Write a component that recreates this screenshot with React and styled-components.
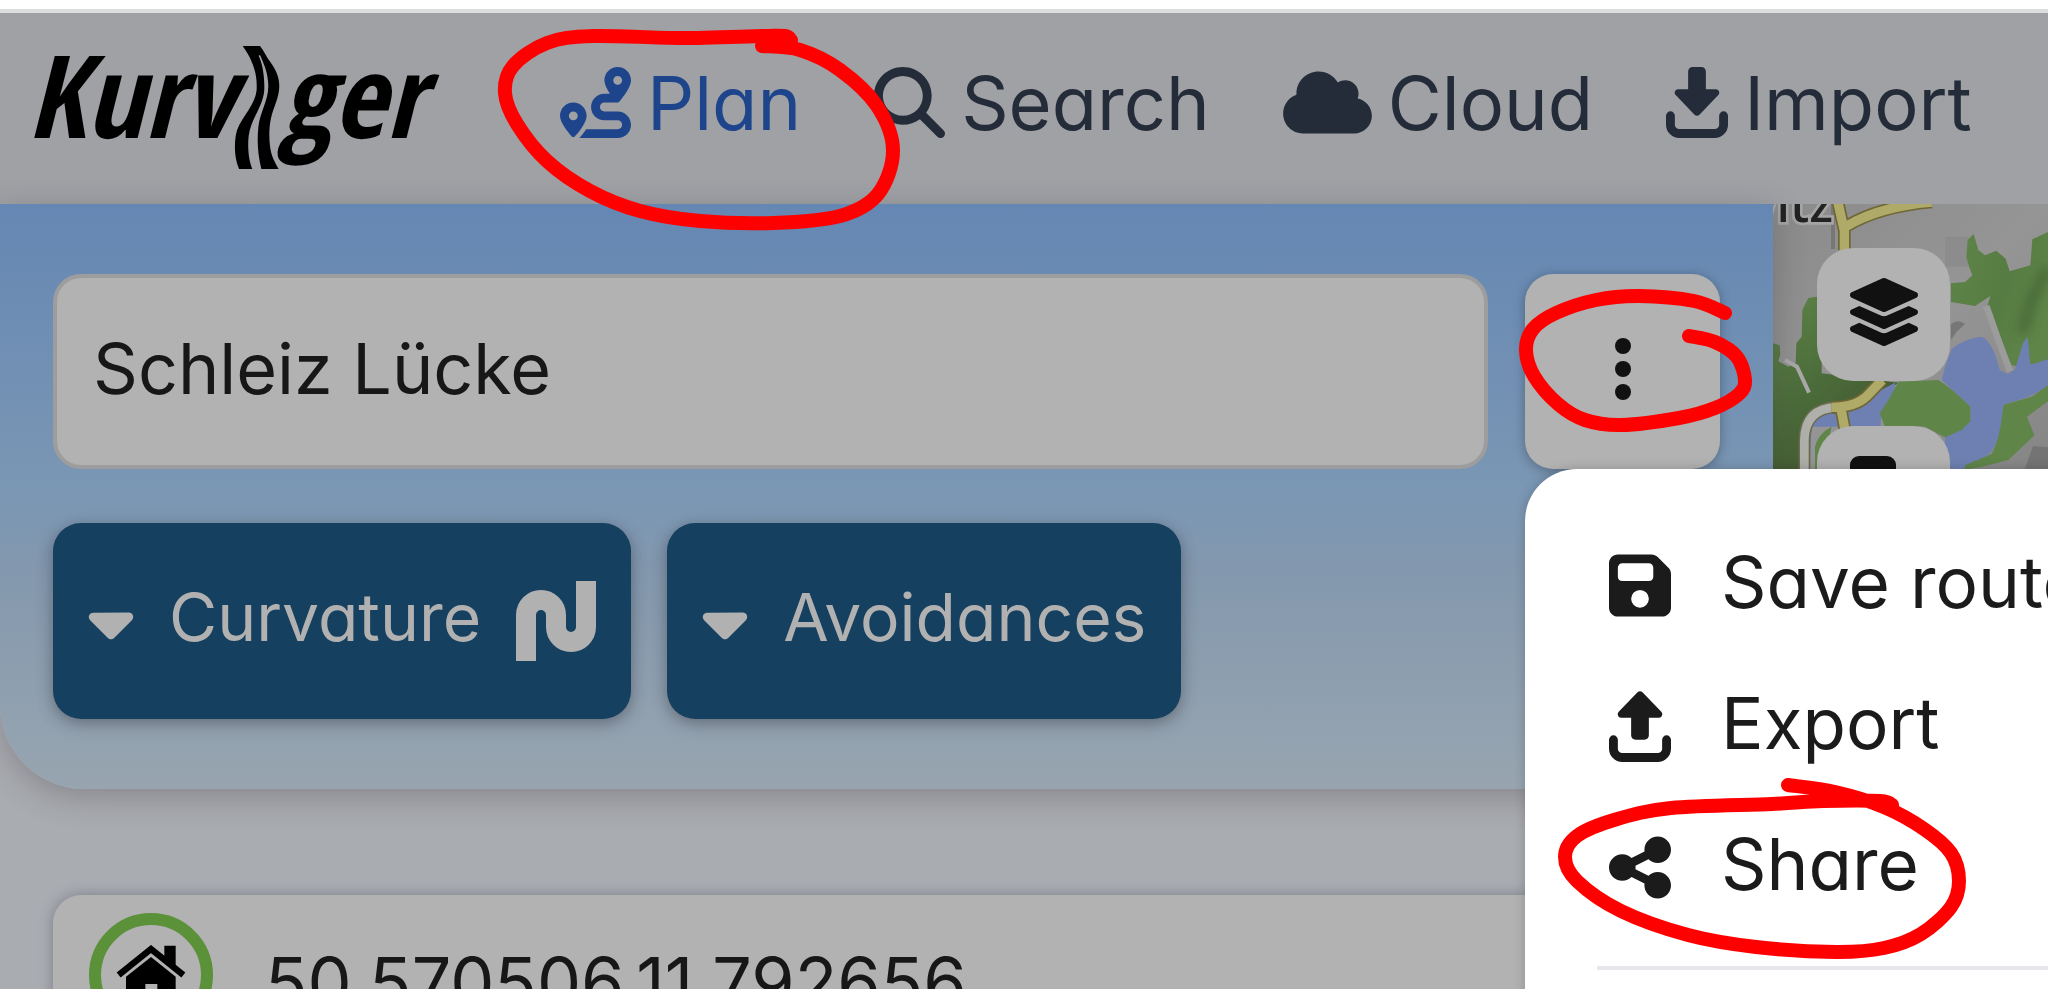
import React from "react";

// IMPORT STYLES
import styled, { createGlobalStyle } from "styled-components";

// IMPORT ICONS
import {
  FaRoute,
  FaMagnifyingGlass,
  FaCloud,
  FaCaretDown,
  FaFloppyDisk,
  FaShareNodes,
} from "react-icons/fa6";
import { FaLayerGroup } from "react-icons/fa";

const navItems = [
  { label: "Plan", Icon: FaRoute, width: 71, active: true },
  { label: "Search", Icon: FaMagnifyingGlass, width: 71 },
  { label: "Cloud", Icon: FaCloud, width: 89 },
  { label: "Import", Icon: ImportIcon, width: 62 },
];

const menuItems = [
  { label: "Save route", Icon: FaFloppyDisk },
  { label: "Export", Icon: ExportIcon },
  { label: "Share", Icon: FaShareNodes },
];

// HAND DRAWN MARKS, AS POINTS ON THE PEN LINE
const marks = [
  [
    [762, 46], [800, 50], [840, 70], [877, 106], [893, 150], [878, 194],
    [840, 216], [773, 223], [700, 221], [640, 211], [590, 191], [547, 161],
    [517, 124], [505, 93], [513, 66], [547, 43], [593, 36], [680, 38],
    [763, 36], [785, 36], [791, 40],
  ],
  [
    [1689, 336], [1715, 342], [1737, 357], [1745, 380], [1739, 394],
    [1715, 408], [1679, 418], [1621, 425], [1585, 420], [1558, 404],
    [1534, 376], [1526, 350], [1533, 329], [1556, 313], [1596, 300],
    [1639, 296], [1694, 301], [1725, 313],
  ],
  [
    [1788, 785], [1835, 792], [1884, 807], [1924, 829], [1951, 853],
    [1959, 881], [1951, 907], [1921, 934], [1884, 948], [1836, 952],
    [1756, 947], [1688, 935], [1621, 911], [1577, 881], [1565, 857],
    [1577, 836], [1614, 820], [1671, 808], [1772, 804], [1823, 801],
    [1880, 801], [1892, 805],
  ],
];

const smoothPath = (points) => {
  const at = (i) => points[Math.max(0, Math.min(points.length - 1, i))];
  let d = `M${at(0).join(" ")}`;
  for (let i = 0; i < points.length - 1; i++) {
    const [p0, p1, p2, p3] = [at(i - 1), at(i), at(i + 1), at(i + 2)];
    const c1 = [0, 1].map((k) => p1[k] + (p2[k] - p0[k]) / 6);
    const c2 = [0, 1].map((k) => p2[k] - (p3[k] - p1[k]) / 6);
    d += ` C${c1.join(" ")} ${c2.join(" ")} ${p2.join(" ")}`;
  }
  return d;
};

function ImportIcon() {
  return (
    <svg viewBox="0 0 448 512" aria-hidden="true">
      <path
        fill="currentColor"
        d="M192 0h64c18 0 32 14 32 32v128h72c22 0 33 26 18 42L242 344c-10 10-26 10-36 0L70 202c-15-16-4-42 18-42h72V32c0-18 14-32 32-32z"
      />
      <path
        d="M32 352v64a64 64 0 0 0 64 64h256a64 64 0 0 0 64-64v-64"
        fill="none"
        stroke="currentColor"
        strokeWidth="64"
        strokeLinecap="round"
      />
    </svg>
  );
}

function ExportIcon() {
  return (
    <svg viewBox="0 0 448 512" aria-hidden="true">
      <path
        fill="currentColor"
        d="M192 352h64c18 0 32-14 32-32V192h72c22 0 33-26 18-42L242 8c-10-10-26-10-36 0L70 150c-15 16-4 42 18 42h72v128c0 18 14 32 32 32z"
      />
      <path
        d="M32 352v64a64 64 0 0 0 64 64h256a64 64 0 0 0 64-64v-64"
        fill="none"
        stroke="currentColor"
        strokeWidth="64"
        strokeLinecap="round"
      />
    </svg>
  );
}

function Logo() {
  return (
    <LogoLink href="#home" aria-label="Kurviger">
      <span>Kurv</span>
      <RoadMark viewBox="42 42 138 376" aria-hidden="true">
        <path d="M68 45H120C134 62 139 78 150 92C168 116 178 140 178 165C178 200 160 230 153 262C147 290 147 320 150 345C153 375 165 395 176 415H124C113 370 111 330 115 290C119 245 145 210 145 165C145 125 130 95 120 72L116 74C126 95 134 130 133 175C131 225 92 265 86 315C82 350 86 390 97 415H57C44 385 42 350 47 315C54 265 106 230 110 175C112 130 100 90 68 45Z" />
      </RoadMark>
      <span>ger</span>
    </LogoLink>
  );
}

function MapView() {
  return (
    <MapContainer aria-label="Map">
      <MapCanvas viewBox="24 12 825 798" aria-hidden="true">
        <defs>
          <linearGradient id="land" x1="0" y1="0" x2="1" y2="1">
            <stop offset="0" stopColor="#8b8b8b" />
            <stop offset="0.5" stopColor="#959595" />
            <stop offset="1" stopColor="#858585" />
          </linearGradient>
          <linearGradient id="valley" x1="0" y1="0" x2="0.7" y2="1">
            <stop offset="0" stopColor="#5f8549" />
            <stop offset="0.5" stopColor="#4b6c3a" />
            <stop offset="1" stopColor="#42542f" />
          </linearGradient>
          <linearGradient id="forest" x1="0" y1="0" x2="1" y2="0.5">
            <stop offset="0" stopColor="#5f8549" />
            <stop offset="0.6" stopColor="#567c43" />
            <stop offset="1" stopColor="#5f8549" />
          </linearGradient>
          <filter id="shade" x="-50%" y="-50%" width="200%" height="200%">
            <feGaussianBlur stdDeviation="16" />
          </filter>
        </defs>
        <rect x="24" y="12" width="825" height="798" fill="url(#land)" />
        <rect x="198" y="12" width="12" height="135" fill="#777" />
        <rect x="540" y="110" width="70" height="90" fill="#8c8c8c" />
        {/* forest */}
        <path
          fill="url(#valley)"
          d="M24 430L44 436L46 462L40 484L70 500L92 488L94 430L110 410L112 330L130 294L170 288V520L400 548L330 600L130 650L108 810H24Z"
        />
        <path
          fill="url(#forest)"
          d="M558 250L600 246L622 226L612 200L604 170L608 120L626 102L640 150L660 166L694 152L722 176L734 214L796 196L802 118L849 96V484L792 494L770 500L740 496L690 400L664 330L676 288L630 318L558 306Z"
        />
        <path
          fill="none"
          stroke="#3e5c2f"
          strokeWidth="34"
          opacity="0.6"
          filter="url(#shade)"
          d="M849 200L800 300L770 400"
        />
        <path fill="#777" d="M558 372Q580 355 600 372L575 395L558 420Z" />
        {/* water */}
        <path
          fill="#6d80b1"
          d="M540 500L560 446Q600 414 652 410Q686 430 704 510L730 522L750 508L774 430L788 410L796 494L849 478V562L780 594L716 614L704 700Q690 760 640 786L600 810H540V708L616 664V620L530 540Z"
        />
        <path
          fill="#6d80b1"
          d="M390 548L388 600L350 636L346 680H140L134 810H120V690Q140 640 190 640L240 620L330 580Z"
        />
        <path
          fill="#5f8549"
          d="M400 545L520 540Q560 565 616 620V664L590 690L540 712L480 680H360L344 640L370 600Z"
        />
        <path
          fill="#5f8549"
          d="M716 614L800 590L849 556V604L786 650L808 706L730 780L660 798L600 810V796L680 762Q704 720 712 640Z"
        />
        <path fill="#5f8549" d="M150 810V740Q160 700 200 680L170 810Z" />
        <path fill="#747474" d="M804 738L849 742V806H780Z" />
        {/* roads */}
        <path
          fill="none"
          stroke="#a9a9a9"
          strokeWidth="12"
          d="M60 480L96 500L132 578"
        />
        <path
          fill="none"
          stroke="#9c9c9c"
          strokeWidth="20"
          d="M664 318L700 420L735 514"
        />
        <path
          fill="none"
          stroke="#6b6b50"
          strokeWidth="36"
          d="M118 810V720Q120 625 214 622"
        />
        <path
          fill="none"
          stroke="#b0b0aa"
          strokeWidth="26"
          d="M118 810V720Q120 625 214 622"
        />
        <g fill="none" stroke="#6e6636" strokeWidth="38">
          <path d="M238 150V92L218 4M242 80Q340 20 500 6" />
          <path d="M200 622Q270 622 304 590L352 540M226 616L240 690" />
        </g>
        <g fill="none" stroke="#b0aa68" strokeWidth="28">
          <path d="M238 150V92L218 4M242 80Q340 20 500 6" />
          <path d="M200 622Q270 622 304 590L352 540M226 616L240 690" />
        </g>
        <MapLabel x="204" y="66" textAnchor="end">
          witz
        </MapLabel>
      </MapCanvas>
      <MapControls>
        <MapButton type="button" aria-label="Layers">
          <FaLayerGroup />
        </MapButton>
        <MapButton type="button" aria-label="Overlays">
          <svg viewBox="0 0 68 68" aria-hidden="true">
            <rect width="46" height="46" rx="9" fill="currentColor" />
            <path
              d="M56 24v32H24"
              fill="none"
              stroke="currentColor"
              strokeWidth="9"
            />
          </svg>
        </MapButton>
      </MapControls>
    </MapContainer>
  );
}

function App() {
  return (
    <Page>
      <GlobalStyle />
      <Header>
        <Logo />
        <Nav>
          {navItems.map(({ label, Icon, width, active }) => (
            <NavLink href={`#${label.toLowerCase()}`} key={label} $active={active}>
              <Glyph $width={width}>
                <Icon />
              </Glyph>
              {label}
            </NavLink>
          ))}
        </Nav>
      </Header>
      <Main>
        <Sidebar>
          <RoutePanel>
            <TitleRow>
              <TitleInput
                type="text"
                aria-label="Route name"
                defaultValue="Schleiz Lücke"
              />
              <MenuAnchor>
                <MoreButton type="button" aria-label="More" aria-expanded="true">
                  <svg viewBox="0 0 16 62" aria-hidden="true">
                    <circle cx="8" cy="8" r="8" />
                    <circle cx="8" cy="31" r="8" />
                    <circle cx="8" cy="54" r="8" />
                  </svg>
                </MoreButton>
                <Menu>
                  {menuItems.map(({ label, Icon }) => (
                    <MenuItem type="button" key={label}>
                      <Glyph $width={62}>
                        <Icon />
                      </Glyph>
                      <Label>{label}</Label>
                    </MenuItem>
                  ))}
                  <Divider />
                </Menu>
              </MenuAnchor>
            </TitleRow>
            <OptionRow>
              <OptionButton type="button">
                <Glyph $width={46}>
                  <FaCaretDown />
                </Glyph>
                <Label>Curvature</Label>
                <CurveMark viewBox="0 0 80 80" aria-hidden="true">
                  <path d="M10 80V34a15 15 0 0 1 30 0v12a15 15 0 0 0 30 0V0" />
                </CurveMark>
              </OptionButton>
              <OptionButton type="button">
                <Glyph $width={46}>
                  <FaCaretDown />
                </Glyph>
                <Label>Avoidances</Label>
              </OptionButton>
            </OptionRow>
          </RoutePanel>
          <Waypoint>
            <WaypointBadge>
              <svg viewBox="168 168 210 180" aria-hidden="true">
                <path
                  d="M176 258L273 180L370 258"
                  fill="none"
                  stroke="currentColor"
                  strokeWidth="19"
                />
                <path
                  fill="currentColor"
                  d="M313 170H347V238L313 210ZM273 204L347 263V345H292V285H256V345H198V263Z"
                />
              </svg>
            </WaypointBadge>
            <WaypointName>50.570506,11.792656</WaypointName>
          </Waypoint>
        </Sidebar>
        <MapView />
      </Main>
      <Marks viewBox="0 0 2048 989" aria-hidden="true">
        {marks.map((points) => (
          <path d={smoothPath(points)} key={points[0].join()} />
        ))}
      </Marks>
    </Page>
  );
}

const GlobalStyle = createGlobalStyle`
  * {
    box-sizing: border-box;
  }
  body {
    margin: 0;
    background: #a9acb1;
    color: #171717;
    font-family: Inter, "Open Sans", sans-serif;
    font-feature-settings: "cv11";
  }
  button,
  input {
    border: none;
    font: inherit;
    font-feature-settings: inherit;
    color: inherit;
  }
`;

const Page = styled.div`
  height: 100vh;
  position: relative;
  overflow: hidden;
  display: flex;
  flex-direction: column;
`;

const Header = styled.header`
  flex: none;
  height: 204px;
  padding: 0 27px 8px;
  display: flex;
  align-items: center;
  gap: 136px;
  background: #9fa1a5;
  border-top: 9px solid #ffffff;
  box-shadow: inset 0 4px #dcdddd;
`;

const LogoLink = styled.a`
  height: 125px;
  margin-top: 10px;
  display: flex;
  align-items: flex-start;
  color: #000000;
  font: italic bold 115px "Open Sans Condensed", "Open Sans", sans-serif;
  line-height: 98px;
  text-decoration: none;
`;

const RoadMark = styled.svg`
  width: 46px;
  height: 125px;
`;

const Glyph = styled.span`
  display: flex;
  svg {
    width: ${(p) => p.$width}px;
    height: 71px;
  }
`;

const Label = styled.span`
  padding-bottom: 8px;
  white-space: nowrap;
`;

const Nav = styled.nav`
  display: flex;
  gap: 73px;
`;

const NavLink = styled.a`
  display: flex;
  align-items: center;
  gap: 16px;
  font-size: 74px;
  line-height: 90px;
  text-decoration: none;
  color: ${(p) => (p.$active ? "#1e458c" : "#252c39")};
`;

const Main = styled.main`
  flex: 1;
  display: grid;
  grid-template-columns: minmax(0, 1fr) 275px;
`;

const Sidebar = styled.section`
  position: relative;
  z-index: 1;
`;

const RoutePanel = styled.div`
  padding: 70px 53px;
  display: flex;
  flex-direction: column;
  gap: 54px;
  border-radius: 0 0 84px 84px;
  background: linear-gradient(#6587b3, #7b97b4 50%, #8398ae 62%, #98a5b0);
  box-shadow: 0 8px 32px rgba(60, 50, 60, 0.3);
`;

const TitleRow = styled.div`
  display: flex;
  gap: 37px;
`;

const TitleInput = styled.input`
  flex: 1;
  min-width: 0;
  height: 195px;
  padding: 0 36px 6px;
  border: 4px solid #9d9d9d;
  border-radius: 28px;
  background: #b2b2b2;
  font-size: 70px;
`;

const MenuAnchor = styled.div`
  position: relative;
`;

const MoreButton = styled.button`
  display: block;
  width: 195px;
  height: 195px;
  padding: 0 0 6px;
  border-radius: 28px;
  background: #b2b2b2;
  box-shadow: 0 2px 12px rgba(0, 0, 0, 0.3);
  svg {
    display: block;
    width: 16px;
    margin: 0 auto;
    fill: #111111;
  }
`;

const Menu = styled.div`
  position: absolute;
  top: 100%;
  left: 0;
  width: 800px;
  height: 700px;
  padding: 46px 72px;
  border-radius: 52px;
  background: #ffffff;
  box-shadow: 0 0 12px rgba(0, 0, 0, 0.2);
`;

const MenuItem = styled.button`
  width: 100%;
  height: 141px;
  padding: 0 12px;
  display: flex;
  align-items: center;
  gap: 50px;
  background: none;
  color: #1b1b1b;
  font-size: 71px;
`;

const Divider = styled.hr`
  height: 4px;
  margin: 28px 0;
  border: none;
  background: #e5e7eb;
`;

const OptionRow = styled.div`
  display: flex;
  gap: 36px;
`;

const OptionButton = styled.button`
  height: 196px;
  padding: 0 35px;
  display: flex;
  align-items: center;
  gap: 35px;
  border-radius: 28px;
  background: #15405f;
  color: #b1b1b1;
  font-size: 66px;
  box-shadow: 0 4px 16px rgba(40, 40, 50, 0.45);
`;

const CurveMark = styled.svg`
  width: 80px;
  height: 80px;
  fill: none;
  stroke: currentColor;
  stroke-width: 20px;
`;

const Waypoint = styled.div`
  height: 196px;
  margin: 106px 53px 0;
  padding: 18px 36px;
  display: flex;
  align-items: flex-end;
  gap: 52px;
  border-radius: 28px;
  background: #b2b2b2;
  box-shadow: 0 0 14px rgba(60, 60, 80, 0.4);
`;

const WaypointBadge = styled.div`
  align-self: flex-start;
  width: 124px;
  height: 124px;
  display: grid;
  place-items: center;
  border: 12px solid #5a9139;
  border-radius: 50%;
  color: #000000;
  svg {
    width: 70px;
  }
`;

const WaypointName = styled.p`
  margin: 0;
  padding-bottom: 36px;
  font-size: 70px;
  line-height: 108px;
`;

const MapContainer = styled.section`
  position: relative;
  overflow: hidden;
  background: #8b8b8b;
`;

const MapCanvas = styled.svg`
  display: block;
  width: 100%;
`;

const MapLabel = styled.text`
  fill: #222222;
  stroke: #a5a5a5;
  stroke-width: 16px;
  paint-order: stroke;
  font-size: 150px;
  font-weight: 500;
  font-family: "Noto Sans", sans-serif;
`;

const MapControls = styled.div`
  position: absolute;
  top: 44px;
  left: 44px;
  display: flex;
  flex-direction: column;
  gap: 45px;
`;

const MapButton = styled.button`
  width: 133px;
  height: 133px;
  padding: 0 0 6px;
  display: grid;
  place-items: center;
  border-radius: 36px;
  background: #b2b2b2;
  color: #111111;
  svg {
    width: 68px;
    height: 68px;
  }
`;

const Marks = styled.svg`
  position: absolute;
  top: 0;
  left: 0;
  width: 100%;
  z-index: 2;
  pointer-events: none;
  fill: none;
  stroke: #ff0000;
  stroke-width: 14px;
  stroke-linecap: round;
  stroke-linejoin: round;
`;

export default App;
